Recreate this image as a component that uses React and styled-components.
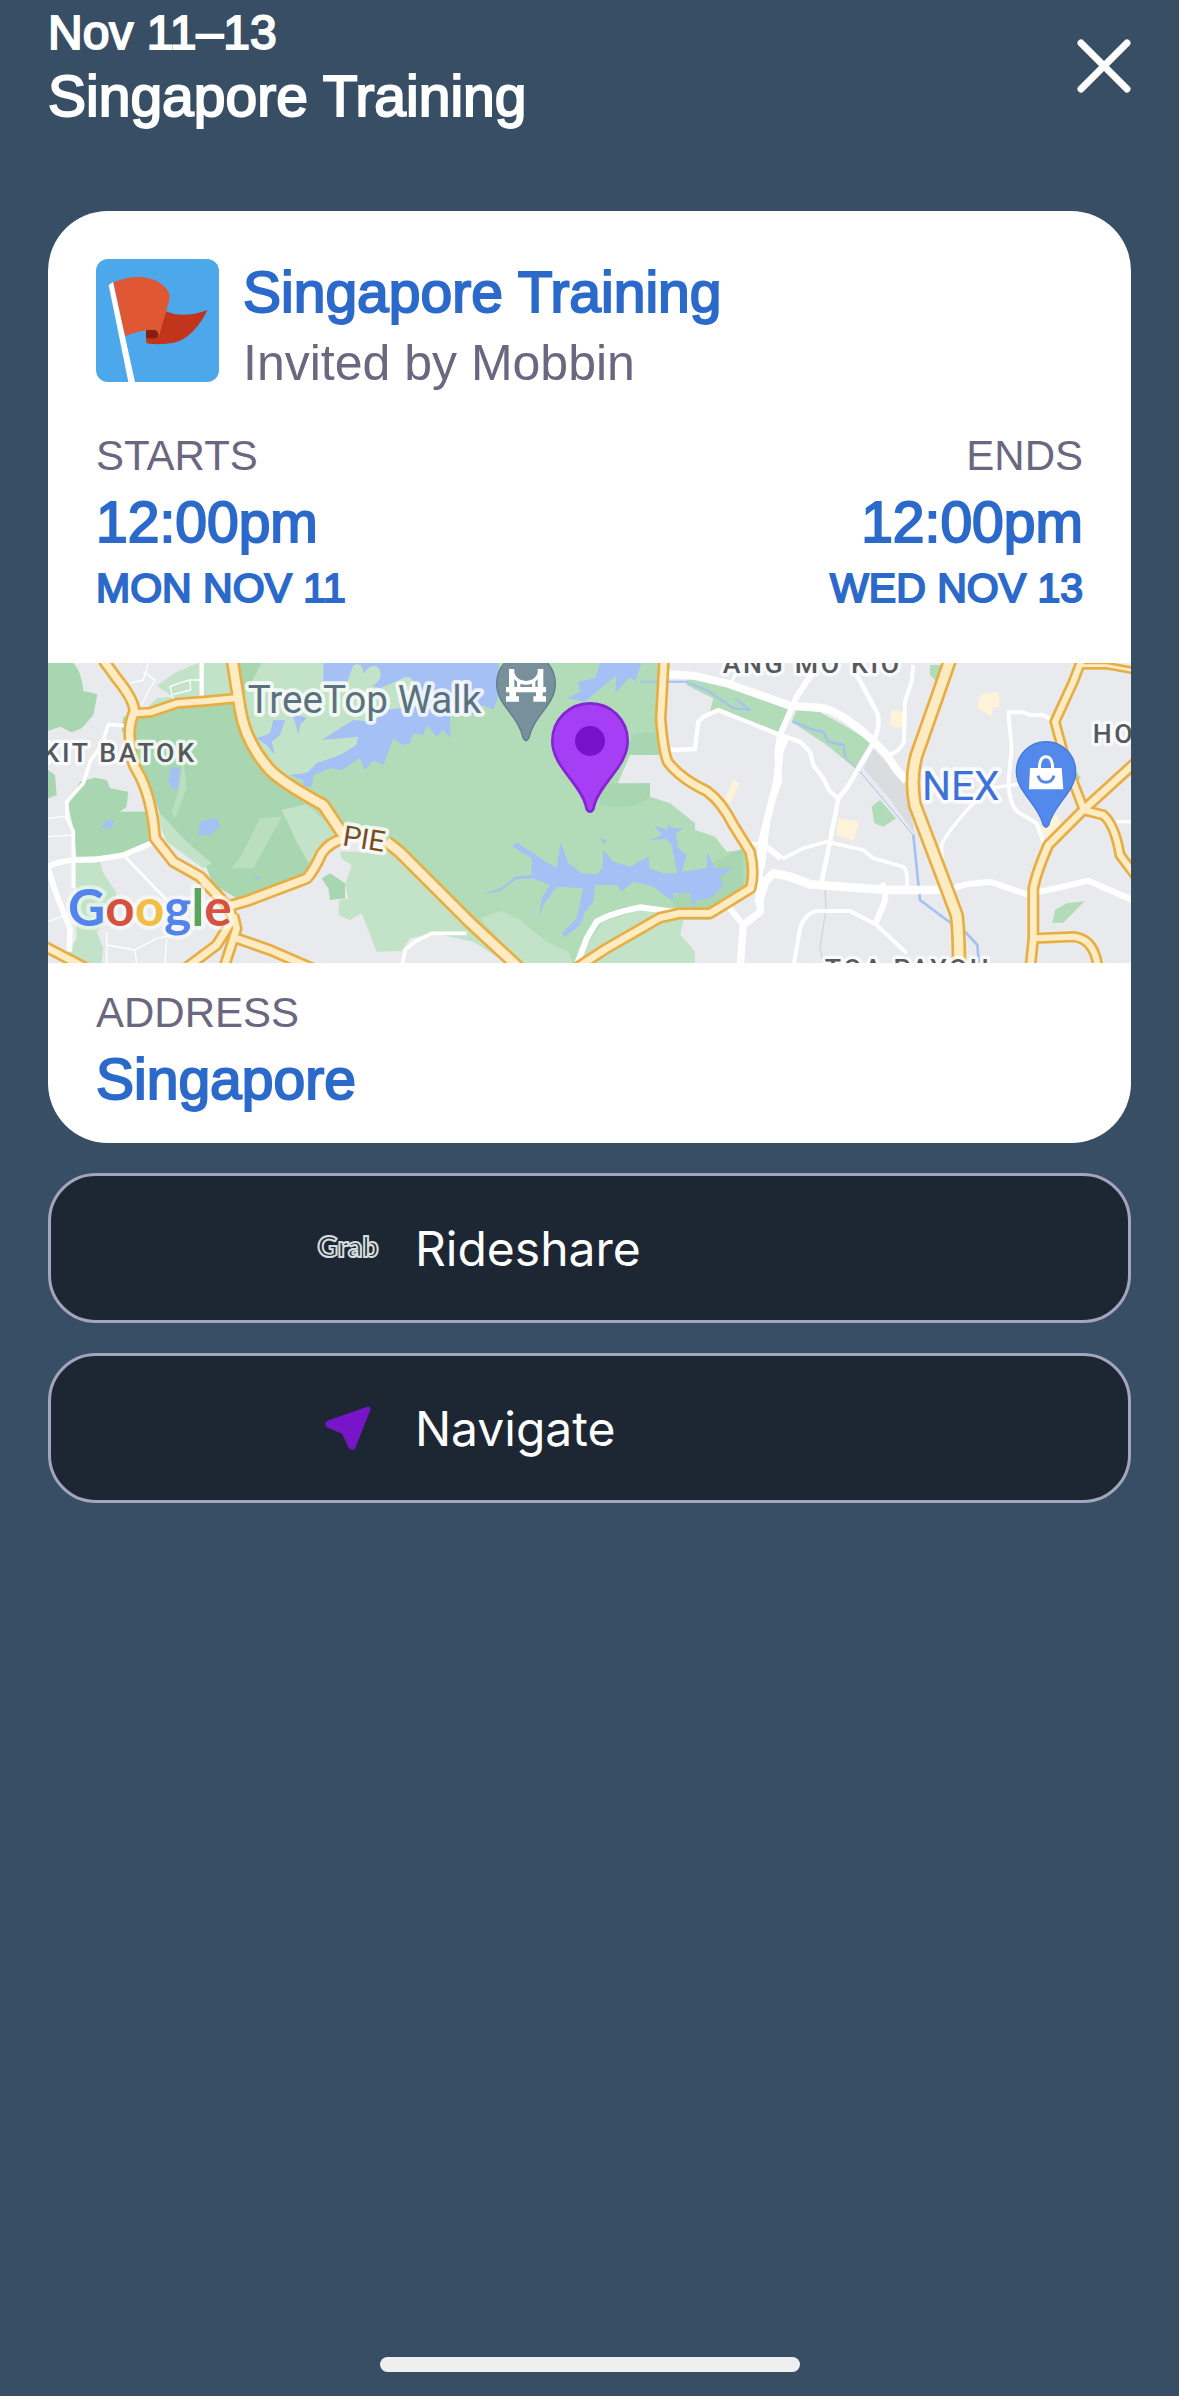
import React from "react";
import styled, { createGlobalStyle } from "styled-components";

const mapAreas = [
  // left side parks
  { fill: "#a8d6b1", d: "M24 24H100Q125 50 130 108L172 118L160 180L125 220L95 232L60 215L24 228Z" },
  { fill: "#a8d6b1", d: "M24 345L45 360L50 420L24 430Z" },
  { fill: "#c3e3c8", d: "M350 92L410 50L475 24H600V135L300 180L350 130L400 125Z" },
  { fill: "#a8d6b1", d: "M250 185L590 125L650 300L740 390L880 490L905 550L850 600L800 670L600 735L520 690L500 640L490 610L445 580L375 520L340 420L290 330L285 250L245 230Z" },
  { fill: "#c3e3c8", d: "M345 470L365 480L440 560L515 625L490 640L380 560Z" },
  { fill: "#b9dfc0", d: "M430 310L440 400L405 490L395 470L415 410Z" },
  { fill: "#b9dfc0", d: "M660 490L725 485L640 640L575 640L605 600Z" },
  { fill: "#c3e3c8", d: "M725 465L810 445L885 520L890 550L850 580L805 625L770 560Z" },
  { fill: "#a8d6b1", d: "M85 450L120 380L165 368L200 375L210 400L265 410L260 455L240 470L320 470L338 560L240 600L110 605L100 520Z" },
  { fill: "#c3e3c8", d: "M108 620H180L190 655L230 715L220 780L170 830L190 880L185 924H110L80 900L110 850Z" },
  // central catchment
  { fill: "#b2dbb8", d: "M585 24H1868L1855 200L1865 300H1770L1732 388L1830 385V425L1890 445L1965 505V525L2025 545L2060 590L2140 580V700L2010 795H1930L1920 840L1965 890V924H1440L1080 590L905 540L740 400L650 300Z" },
  { fill: "#c3e3c8", d: "M640 24H960L1130 60L1140 150L1000 230L870 330L740 370L650 290L600 180Z" },
  { fill: "#a8d6b1", d: "M585 24H665L635 80L610 110Z" },
  { fill: "#a8d6b1", d: "M1780 240Q1830 225 1860 240L1865 298L1750 300Z" },
  { fill: "#a8d6b1", d: "M1680 385H1830V425Q1780 470 1680 450Z" },
  { fill: "#a8d6b1", d: "M2020 620L2110 580V710L2000 760H1900V720L2040 700Z" },
  { fill: "#c3e3c8", d: "M900 590L1080 590L1440 924H1400L1300 860L1180 835L1110 850L1085 888L1010 890L965 775L930 795L895 780L898 735L925 730L915 690L935 630L905 612Z" },
  { fill: "#a8d6b1", d: "M845 670L870 655L915 685L915 730L870 735L865 700Z" },
  { fill: "#c3e3c8", d: "M1320 790L1385 768L1440 795L1520 860L1585 890L1600 924H1440Z" },
  { fill: "#c3e3c8", d: "M1640 870L1690 800L1800 765L1880 775L1930 795L1920 840L1965 890V924H1610Z" },
  // north east
  { fill: "#b2dbb8", d: "M1940 72L2010 70L2220 150L2250 165L2220 235L2040 165L2010 170L2020 130L1940 90Z" },
  { fill: "#b2dbb8", d: "M2270 165L2340 172L2410 210L2492 260L2445 340L2360 270L2255 200Z" },
  { fill: "#b2dbb8", d: "M2670 30H2705L2695 85L2670 60Z" },
  { fill: "#b2dbb8", d: "M2495 455L2520 435L2568 490L2530 515L2503 505Z" },
  { fill: "#b2dbb8", d: "M3045 765L3080 745L3135 738L3070 803H3037Z" },
  { fill: "#b2dbb8", d: "M3100 340L3123 368L3105 385Z" },
  { fill: "#fdf3d8", d: "M2822 118L2875 110L2880 155L2858 160L2855 185L2810 158Z" },
  { fill: "#fdf3d8", d: "M2555 165L2600 172L2592 220L2550 212Z" },
  { fill: "#fdf3d8", d: "M2395 490L2458 500L2440 562L2425 550L2388 540Z" },
  { fill: "#fdf3d8", d: "M2080 375L2100 385L2070 445L2050 440Z" },
  { fill: "#fdf3d8", d: "M2990 525L3050 480L3070 520L3030 560Z" },
  { fill: "#dadce0", d: "M2500 280L2600 390L2625 540L2650 590L2620 530L2540 420L2470 340Z" },
];

const mapWater = [
  "M850 24H1375L1380 110L1360 165L1330 150L1300 180H1230L1232 250L1210 225L1190 245L1160 210L1150 240L1120 235L1110 265L1085 270L1060 250L1030 330L1000 315L975 345L960 310L905 345L870 340L820 360L815 395L790 395V375L745 360L800 355L830 325L900 300L950 270L955 245L845 255L900 220L940 195L1000 200L1040 165L1140 150L1090 70L1020 100L960 80L850 90Z",
  "M650 250L690 235L700 195L735 195L720 240L695 260L705 300L680 270Z",
  "M750 170L800 190L780 210L775 240L765 200Z",
  "M395 335L420 340L415 400L400 405L385 380Z",
  "M480 500L530 488L540 515L510 540L475 542Z",
  "M183 520L200 495L222 495L215 518Z",
  "M642 670L660 663L656 676Z",
  "M1680 24H1805L1785 80L1770 65L1725 115L1730 60L1670 110L1635 140L1580 130L1620 110L1615 80L1665 70Z",
  "M1418 575L1430 562L1480 595L1520 622L1550 638L1562 560L1585 625L1625 655L1670 658L1688 640L1690 585L1720 620L1770 635L1825 605L1828 640L1870 655L1912 655L1895 570L1880 552L1830 555L1865 540L1842 510L1880 525L1888 505L1895 520L1930 520L1908 535L1915 580L1940 600L1925 650L2000 640L2002 592L2025 640L2078 640L2040 665L2050 695L2010 730L1970 735L1960 755L1950 715H1900V740L1840 695L1780 680L1745 710L1730 690H1665L1660 740L1635 770L1620 810L1575 845L1565 835L1610 790L1630 700L1550 695L1510 750L1498 785L1505 730L1530 690L1480 670L1430 672L1380 708L1330 717L1390 695L1425 665L1475 660V610Z",
  "M1680 550L1700 555L1692 568Z",
];

const streams = [
  { w: 6, d: "M1800 80H1935L2000 105L2080 160L2130 165L2085 130" },
  { w: 7, d: "M2258 200L2320 225L2350 230L2365 260L2410 270L2415 305" },
  { w: 3, d: "M2415 305L2460 350L2620 540" },
  { w: 8, d: "M2620 540L2640 735L2720 795L2780 835L2812 870L2818 940" },
];

const streets = [
  { w: 4, d: "M270 85L310 75L325 24M310 50L345 75L320 120L305 150M400 135L390 95L415 85L450 75H480M450 78L452 105L400 118" },
  { w: 4, d: "M24 490L85 483M24 545L95 540M24 800L75 780M200 830V924M200 870L285 885L350 850L400 840M285 885L290 924M380 850L375 924" },
  { w: 4, d: "M2355 700L2358 760L2340 880L2350 924", color: "#d3d5d9" },
  { w: 13, d: "M485 24V130" },
  { w: 11, d: "M262 213L205 208L185 270L150 320L130 385L80 440L82 490L100 530V700" },
  { w: 17, d: "M24 635Q50 620 100 615L160 615L250 600L345 560" },
  { w: 17, d: "M24 640L50 720L90 820L88 890" },
  { w: 9, d: "M255 605L380 735" },
  { w: 11, d: "M1085 940L1095 885L1125 860L1175 835L1280 835" },
  { w: 18, d: "M1610 930L1640 850L1670 800Q1710 775 1800 757L1900 770" },
  { w: 24, d: "M1880 58L1960 62L2060 85L2250 152L2340 158Q2400 165 2500 258L2540 300L2570 345L2600 378" },
  { w: 13, d: "M1890 285L1965 282L1975 200L1990 185L2035 165L2220 240L2280 260L2310 290L2320 330L2350 370L2370 410L2395 430" },
  { w: 18, d: "M2320 50L2270 125L2220 240L2212 290L2218 375L2185 470L2165 640" },
  { w: 14, d: "M2450 60L2510 170Q2525 200 2500 265L2420 400L2395 430L2370 560L2345 680" },
  { w: 12, d: "M2620 30L2615 80L2595 140L2592 260Q2580 290 2545 300" },
  { w: 9, d: "M2085 60L2070 90" },
  { w: 22, d: "M2240 240L2220 290L2210 380L2165 560L2155 700L2162 770L2110 810L2100 940" },
  { w: 18, d: "M2062 750L2110 810" },
  { w: 12, d: "M2120 565L2170 570L2220 612" },
  { w: 26, d: "M2155 745L2175 680L2200 655L2250 665L2310 688L2540 705H2720" },
  { w: 18, d: "M2720 705L2780 688L2850 680L2960 718L3060 697L3145 677L3300 745" },
  { w: 11, d: "M2165 560L2230 610L2290 580L2360 560L2470 585L2500 610L2590 635Q2605 650 2600 700" },
  { w: 12, d: "M2260 940L2280 820Q2300 765 2340 768H2430L2510 810L2600 895" },
  { w: 18, d: "M2525 685Q2545 720 2530 750L2505 810" },
  { w: 10, d: "M2705 680V570Q2715 540 2790 455L2850 400L2950 385" },
  { w: 12, d: "M2905 385L2915 280L2905 172H2950L2970 180H3010L3045 200" },
  { w: 12, d: "M2905 385Q2910 460 2940 475L2990 505L3010 560H3030" },
  { w: 10, d: "M3220 500H3300" },
];

const highways = [
  { w: 38, d: "M190 15L230 70Q283 135 283 170Q265 210 270 255Q272 320 290 345Q335 420 345 550L400 620L480 665L550 740" },
  { w: 34, d: "M283 175L330 172L410 145L500 138L585 130" },
  { w: 42, d: "M1040 560L1080 592L1290 802L1450 950" },
  { w: 42, d: "M577 15L600 160Q615 260 690 345Q730 385 850 450L910 540" },
  { w: 38, d: "M560 755L620 738L800 670Q820 650 845 595Q870 560 910 552" },
  { w: 36, d: "M550 735L580 790L530 870L430 945M580 780L590 820L550 945M590 850L690 885L840 950M15 875L140 940" },
  { w: 36, d: "M1872 15L1862 190Q1870 290 1883 320Q1920 370 2000 408Q2045 440 2080 510L2130 590Q2145 650 2132 700L2010 775H1920L1860 788L1700 880L1600 945" },
  { w: 44, d: "M2730 15L2690 130L2630 300Q2610 370 2625 450L2720 700L2750 780Q2757 830 2757 945" },
  { w: 34, d: "M3125 15L3100 80L3045 200L3080 330L3130 460" },
  { w: 24, d: "M3125 32H3200L3300 50" },
  { w: 36, d: "M2970 945L2980 850V700Q2990 650 3025 570L3130 465L3300 310" },
  { w: 34, d: "M3130 465L3190 480Q3225 510 3240 600L3300 680M2985 850L3100 845Q3165 850 3175 945" },
];

function MapDrawing() {
  return (
    <MapSvg viewBox="24 24 3249 900" preserveAspectRatio="xMidYMid slice" role="img" aria-label="Map of Singapore">
      <rect x="0" y="0" width="3400" height="960" fill="#e8eaed" />
      {mapAreas.map((area) => <path key={area.d} d={area.d} fill={area.fill} />)}
      {mapWater.map((d) => <path key={d} d={d} fill="#a4c0f5" />)}
      <g fill="#c3e3c8">
        <path d="M940 30Q970 20 970 55Q1000 15 1020 45Q1030 80 990 95L950 125L915 100Z" />
        <ellipse cx="1100" cy="105" rx="26" ry="40" />
      </g>
      <g fill="none" strokeLinejoin="round">
        {streams.map((s) => <path key={s.d} d={s.d} stroke="#a4c0f5" strokeWidth={s.w} />)}
        {streets.map((s) => <path key={s.d} d={s.d} stroke={s.color || "#fff"} strokeWidth={s.w} />)}
        {highways.map((h) => <path key={h.d} d={h.d} stroke="#e8ae43" strokeWidth={h.w} />)}
        {highways.map((h) => <path key={h.d} d={h.d} stroke="#fdecc3" strokeWidth={h.w - 16} />)}
      </g>

      <PlaceName x="1324" y="174" $size={116} $color="#5a7280" textAnchor="end">TreeTop Walk</PlaceName>
      <AreaName x="470" y="320" textAnchor="end">KIT BATOK</AreaName>
      <AreaName x="2048" y="53">ANG MO KIO</AreaName>
      <AreaName x="3158" y="263">HO</AreaName>
      <AreaName x="2354" y="968">TOA PAYOH</AreaName>
      <PlaceName x="2646" y="436" $size={122} $color="#3c72d9">NEX</PlaceName>
      <PlaceName x="905" y="571" $size={86} $color="#7b4b1d" transform="rotate(9 905 571)">PIE</PlaceName>

      {/* TreeTop Walk */}
      <path d="M1458 -4C1508 -4 1546 36 1546 86C1546 150 1482 180 1467 248Q1458 266 1449 248C1434 180 1370 150 1370 86C1370 36 1408 -4 1458 -4Z" fill="#78909c" stroke="#607d8b" strokeWidth="4" />
      <path d="M1407 42H1423V54Q1430 76 1458 78Q1486 76 1493 54V42H1510V96H1518V112H1508V124H1518V140H1480V124H1488V112H1428V124H1437V140H1398V124H1408V112H1398V96H1407ZM1423 72V96H1431V80ZM1441 86V96H1476V86Q1458 92 1441 86ZM1486 80V96H1493V72Z" fill="#fff" fillRule="evenodd" />
      {/* NEX */}
      <path d="M3018 260C3068 260 3107 300 3107 350C3107 410 3040 450 3027 508Q3018 526 3009 508C2996 450 2929 410 2929 350C2929 300 2968 260 3018 260Z" fill="#5489ec" stroke="#4079e0" strokeWidth="4" />
      <path d="M2970 339H3065L3070 403H2967Z" fill="#fff" />
      <path d="M2998 342Q2998 305 3018 305Q3038 305 3038 342" fill="none" stroke="#fff" strokeWidth="9" />
      <path d="M2994 362Q3000 382 3018 382Q3036 382 3042 362" fill="none" stroke="#5489ec" strokeWidth="9" />
      {/* event location */}
      <path d="M1650 145C1713 145 1763 195 1763 258C1763 335 1679 385 1663 450Q1660 470 1650 470Q1640 470 1637 450C1621 385 1537 335 1537 258C1537 195 1587 145 1650 145Z" fill="#a63ef6" stroke="#8325d2" strokeWidth="8" />
      <circle cx="1650" cy="258" r="45" fill="#7612c9" />

      <GoogleMark x="84" y="814">
        <tspan fill="#5383ec">G</tspan>
        <tspan fill="#d85140">o</tspan>
        <tspan fill="#f1be42">o</tspan>
        <tspan fill="#5383ec">g</tspan>
        <tspan fill="#58a55c">l</tspan>
        <tspan fill="#d85140">e</tspan>
      </GoogleMark>
    </MapSvg>
  );
}

function FlagIcon() {
  return (
    <EventIcon viewBox="24 27 369 369" aria-hidden="true">
      <rect x="24" y="27" width="369" height="369" fill="#4ca7eb" />
      <path d="M234 184Q285 207 359 180Q315 265 258 278Q220 285 182 281Q173 279 174 270V242L206 250Z" fill="#c1351d" />
      <path d="M174 239H204Q216 252 208 262Q202 267 174 264Z" fill="#85200f" />
      <path d="M76 97Q120 80 160 81Q225 88 245 133Q246 142 240 165L212 262Q214 240 196 239Q160 238 111 259Z" fill="#df5833" />
      <path d="M62 105L75 96L141 396H121Z" fill="#fff" />
    </EventIcon>
  );
}

function App() {
  return (
    <>
      <GlobalStyle />
      <Page>
        <Header>
          <div>
            <DateRange>Nov 11–13</DateRange>
            <Title>Singapore Training</Title>
          </div>
          <CloseButton aria-label="Close">
            <svg viewBox="0 0 54 54" width="54" height="54">
              <path d="M4 4L50 50M50 4L4 50" stroke="#fff" strokeWidth="7" strokeLinecap="round" />
            </svg>
          </CloseButton>
        </Header>

        <Card>
          <Summary>
            <FlagIcon />
            <div>
              <EventName>Singapore Training</EventName>
              <Host>Invited by Mobbin</Host>
            </div>
          </Summary>
          <Times>
            <Field>
              <Label>STARTS</Label>
              <Value>12:00pm</Value>
              <Day>MON NOV 11</Day>
            </Field>
            <Field $align="right">
              <Label>ENDS</Label>
              <Value>12:00pm</Value>
              <Day>WED NOV 13</Day>
            </Field>
          </Times>
          <MapDrawing />
          <Address>
            <Label>ADDRESS</Label>
            <Value>Singapore</Value>
          </Address>
        </Card>

        <Action>
          <ActionIcon>
            <svg viewBox="0 0 74 36" width="74" height="36" aria-hidden="true">
              <GrabMark x="37" y="27" textAnchor="middle">Grab</GrabMark>
            </svg>
          </ActionIcon>
          Rideshare
        </Action>
        <Action>
          <ActionIcon>
            <svg viewBox="0 0 46 44" width="46" height="44">
              <path d="M3 17L43 3L28 41H26L19 26L3 19Z" fill="#7715c8" stroke="#7715c8" strokeWidth="5" strokeLinejoin="round" />
            </svg>
          </ActionIcon>
          Navigate
        </Action>

        <HomeIndicator />
      </Page>
    </>
  );
}

export default App;

const GlobalStyle = createGlobalStyle`
  * {
    box-sizing: border-box;
    margin: 0;
  }

  body {
    background: #384e65;
    font-family: "Liberation Sans", Arial, sans-serif;
  }
`;

const Page = styled.main`
  min-height: 100vh;
  padding: 3px 48px 24px;
  display: flex;
  flex-direction: column;
`;

const Header = styled.header`
  display: flex;
  justify-content: space-between;
  align-items: center;
  margin-bottom: 82px;
  color: #fff;
`;

const DateRange = styled.p`
  font-size: 48px;
  line-height: 60px;
  -webkit-text-stroke: 2px;
`;

const Title = styled.h1`
  font-size: 57px;
  line-height: 66px;
  font-weight: 400;
  -webkit-text-stroke: 2px;
`;

const CloseButton = styled.button`
  width: 54px;
  height: 54px;
  padding: 0;
  border: 0;
  background: none;
  cursor: pointer;

  svg {
    display: block;
  }
`;

const Card = styled.section`
  background: #fff;
  border-radius: 60px;
  overflow: hidden;
`;

const Summary = styled.div`
  display: flex;
  align-items: flex-start;
  gap: 24px;
  padding: 48px 48px 0;
`;

const EventIcon = styled.svg`
  flex: none;
  width: 123px;
  height: 123px;
  border-radius: 12px;
`;

const EventName = styled.h2`
  font-size: 57px;
  line-height: 66px;
  font-weight: 400;
  color: #2b6acb;
  -webkit-text-stroke: 2px;
`;

const Host = styled.p`
  margin-top: 8px;
  font-size: 50px;
  line-height: 60px;
  color: #6b6780;
`;

const Times = styled.div`
  display: flex;
  justify-content: space-between;
  padding: 36px 48px 48px;
`;

const Field = styled.div`
  display: flex;
  flex-direction: column;
  gap: 6px;
  text-align: ${(props) => props.$align || "left"};
`;

const Label = styled.p`
  font-size: 42px;
  line-height: 54px;
  color: #6b6780;
`;

const Value = styled.p`
  font-size: 57px;
  line-height: 66px;
  color: #2b6acb;
  -webkit-text-stroke: 2px;
`;

const Day = styled.p`
  font-size: 41px;
  line-height: 54px;
  color: #2b6acb;
  -webkit-text-stroke: 2px;
`;

const Address = styled(Field)`
  padding: 23px 48px 31px;
`;

const MapSvg = styled.svg`
  display: block;
  width: 100%;
  height: 300px;
`;

const PlaceName = styled.text`
  font-family: Roboto, sans-serif;
  font-size: ${(props) => props.$size}px;
  fill: ${(props) => props.$color};
  stroke: rgba(255, 255, 255, 0.8);
  stroke-width: 22px;
  stroke-linejoin: round;
  paint-order: stroke;
`;

const AreaName = styled.text`
  font-family: Roboto, sans-serif;
  font-size: 80px;
  font-weight: 500;
  letter-spacing: 8px;
  fill: #55595d;
  stroke: rgba(255, 255, 255, 0.8);
  stroke-width: 20px;
  stroke-linejoin: round;
  paint-order: stroke;
`;

const GoogleMark = styled.text`
  font-family: Lato, sans-serif;
  font-size: 154px;
  font-weight: 700;
  stroke: rgba(255, 255, 255, 0.5);
  stroke-width: 24px;
  stroke-linejoin: round;
  paint-order: stroke;
`;

const Action = styled.button`
  display: flex;
  align-items: center;
  gap: 30px;
  height: 150px;
  margin-top: 30px;
  padding: 0 24%;
  border: 3px solid #a3a5bd;
  border-radius: 48px;
  background: #1d2733;
  color: #fff;
  font-family: Inter, sans-serif;
  font-size: 48px;
  text-align: left;
  cursor: pointer;
`;

const ActionIcon = styled.span`
  display: flex;
  justify-content: center;
  width: 74px;
`;

const GrabMark = styled.text`
  font-family: Lato, sans-serif;
  font-size: 28px;
  font-weight: 900;
  fill: #1d2733;
  stroke: #d5dcdd;
  stroke-width: 2px;
`;

const HomeIndicator = styled.div`
  align-self: center;
  width: 420px;
  height: 15px;
  margin-top: auto;
  border-radius: 8px;
  background: #efeff0;
`;
